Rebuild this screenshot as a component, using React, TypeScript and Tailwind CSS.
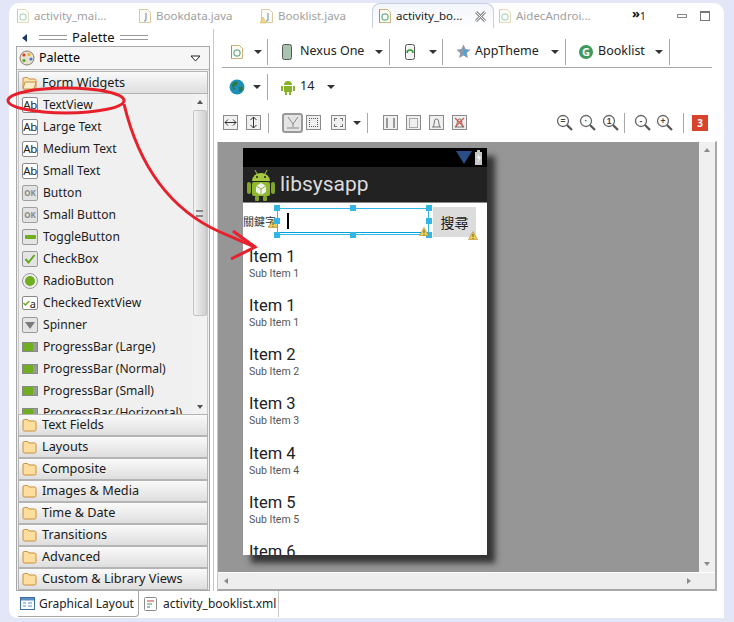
import type { ReactNode } from "react";

// small drawings used all over the Eclipse chrome
function XmlIcon({ faded = false }: { faded?: boolean }) {
  return (
    <svg width="14" height="16" viewBox="0 0 14 16" className={`shrink-0 ${faded ? "opacity-50" : ""}`}>
      <path d="M1.5 1.5h8l3 3v10h-11z" fill="#fbfbf3" stroke="#c9b37a" />
      <rect x="4" y="6" width="6" height="6" rx="2" fill="none" stroke="#3f9a7c" />
      <path d="M1.5 1.5v13" stroke="#5aa0c8" />
    </svg>
  );
}

function JavaIcon({ warn = false }: { warn?: boolean }) {
  return (
    <svg width="14" height="16" viewBox="0 0 14 16" className="shrink-0 opacity-70">
      <path d="M1.5 1.5h8l3 3v10h-11z" fill="#fbfbf5" stroke="#c9b37a" />
      <path d="M8 5v6q0 2-2 2" fill="none" stroke="#6b7fb0" strokeWidth="1.4" />
      {warn && <path d="M3 9l3 6H0z" fill="#f1c84b" stroke="#b08a20" strokeWidth=".5" />}
    </svg>
  );
}

function Caret() {
  return <span className="block w-0 h-0 border-x-[4px] border-x-transparent border-t-[4px] border-t-[#333] shrink-0" />;
}

function Sep({ h = "h-[26px]" }: { h?: string }) {
  return <span className={`block w-px bg-[#a8a8a8] shrink-0 ${h}`} />;
}

function Folder({ open = false }: { open?: boolean }) {
  return (
    <svg width="15" height="14" viewBox="0 0 15 14" className="shrink-0">
      <path d="M1 3q0-1.500 1.500-1.500h3L7 3h5.500Q14 3 14 4.500v7q0 1.500-1.500 1.500h-10Q1 13 1 11.500z" fill={open ? "#fbe3ad" : "#fdde9d"} stroke="#c98d3c" />
      {open && <path d="M3 6h11l-2 7H1z" fill="#fdeecb" stroke="#c98d3c" />}
    </svg>
  );
}

function AbIcon() {
  return (
    <span className="w-[16px] h-[16px] border border-[#8a8a8a] rounded-[2px] bg-white text-[11.500px] leading-[14px] text-[#222] text-center shrink-0 tracking-[-0.5px]">
      Ab
    </span>
  );
}

function OkIcon() {
  return (
    <span className="w-[16px] h-[16px] border border-[#a0a0a0] rounded-[2px] bg-[#e2e2e2] text-[8px] font-bold leading-[14px] text-[#8a8a8a] text-center shrink-0">
      OK
    </span>
  );
}

function BoxIcon({ children }: { children: ReactNode }) {
  return (
    <span className="w-[16px] h-[16px] border border-[#9a9a9a] rounded-[2px] bg-[#e4e4e4] flex items-center justify-center shrink-0">
      {children}
    </span>
  );
}

function ProgressIcon() {
  return (
    <span className="w-[16px] h-[10px] flex shrink-0 border border-[#888]">
      <span className="w-[10px] bg-[#6fae1e]" />
      <span className="flex-1 bg-[#9a9a9a]" />
    </span>
  );
}

const paletteItems: [string, ReactNode][] = [
  ["TextView", <AbIcon />],
  ["Large Text", <AbIcon />],
  ["Medium Text", <AbIcon />],
  ["Small Text", <AbIcon />],
  ["Button", <OkIcon />],
  ["Small Button", <OkIcon />],
  ["ToggleButton", <BoxIcon><span className="w-[11px] h-[4px] bg-[#6fae1e] rounded-[1px]" /></BoxIcon>],
  ["CheckBox", (
    <BoxIcon>
      <svg width="12" height="12" viewBox="0 0 12 12"><path d="M1.500 6l3 3.500 6-7.500" fill="none" stroke="#64a81c" strokeWidth="2" /></svg>
    </BoxIcon>
  )],
  ["RadioButton", (
    <span className="w-[16px] h-[16px] rounded-full border border-[#999] bg-[#eee] flex items-center justify-center shrink-0">
      <span className="w-[10px] h-[10px] rounded-full bg-[#6fae1e]" />
    </span>
  )],
  ["CheckedTextView", (
    <span className="w-[16px] h-[14px] border border-[#8a8a8a] rounded-[2px] bg-white flex items-center justify-end pr-[1px] text-[11px] leading-none shrink-0">
      <svg width="7" height="6" viewBox="0 0 7 6"><path d="M.5 3l2 2 4-4" fill="none" stroke="#64a81c" strokeWidth="1.400" /></svg>
      a
    </span>
  )],
  ["Spinner", <BoxIcon><span className="w-0 h-0 border-x-[5px] border-x-transparent border-t-[7px] border-t-[#7b7b7b]" /></BoxIcon>],
  ["ProgressBar (Large)", <ProgressIcon />],
  ["ProgressBar (Normal)", <ProgressIcon />],
  ["ProgressBar (Small)", <ProgressIcon />],
  ["ProgressBar (Horizontal)", <ProgressIcon />],
];

const drawers = ["Text Fields", "Layouts", "Composite", "Images & Media", "Time & Date", "Transitions", "Advanced", "Custom & Library Views"];

function Drawer({ label, open = false, h = "h-[22px]" }: { label: string; open?: boolean; h?: string }) {
  return (
    <div className={`${h} flex items-center gap-[5px] pl-[3px] border border-[#b4b4b4] bg-gradient-to-b from-[#fafafa] to-[#dedede] text-[12.700px] text-[#1a1a1a] shrink-0`}>
      <Folder open={open} />
      {label}
    </div>
  );
}

function Palette() {
  return (
    <div className="w-[194px] shrink-0 flex flex-col">
      <div className="h-[17px] flex items-center pl-[6px] text-[#111] shrink-0">
        <span className="w-0 h-0 border-y-[4px] border-y-transparent border-r-[5px] border-r-[#1b3a63]" />
        <span className="w-[28px] h-[5px] border-y border-[#999] ml-[12px]" />
        <span className="mx-[5px] leading-none">Palette</span>
        <span className="w-[28px] h-[5px] border-y border-[#999]" />
      </div>
      <div className="flex-1 min-h-0 border border-[#a8a8a8] flex flex-col">
        <div className="h-[23px] flex items-center pl-[2px] pr-[8px] border-b border-[#b4b4b4] shrink-0 bg-[#f6f6f6]">
          <svg width="16" height="16" viewBox="0 0 16 16" className="shrink-0">
            <circle cx="8" cy="8" r="7" fill="#e8e0cf" stroke="#8c7f67" />
            <circle cx="5" cy="5" r="1.600" fill="#d23a2a" />
            <circle cx="10" cy="4.500" r="1.600" fill="#e5b02b" />
            <circle cx="12" cy="9" r="1.600" fill="#3a7fd0" />
            <circle cx="5" cy="10.500" r="1.600" fill="#52a43a" />
          </svg>
          <span className="ml-[4px] flex-1 text-[12.500px]">Palette</span>
          <svg width="11" height="7" viewBox="0 0 11 7" className="shrink-0">
            <path d="M1 1h9L5.500 6z" fill="#fff" stroke="#222" />
          </svg>
        </div>
        <div className="flex-1 min-h-0 flex flex-col px-[1px] pt-[1px] bg-[#f0f0f0]">
          <Drawer label="Form Widgets" open h="h-[23px]" />
          <div className="h-[320px] flex shrink-0 overflow-hidden border-x border-[#c8c8c8]">
            <div className="flex-1 min-w-0 flex flex-col">
              {paletteItems.map(([label, icon]) => (
                <div key={label} className="h-[22px] shrink-0 flex items-center gap-[5px] pl-[3px] text-[12.100px] text-[#1c1c1c] whitespace-nowrap">
                  {icon}
                  {label}
                </div>
              ))}
            </div>
            <div className="w-[15px] shrink-0 bg-[#f2f2f2] flex flex-col items-center">
              <span className="mt-[6px] w-0 h-0 border-x-[3px] border-x-transparent border-b-[4px] border-b-[#555]" />
              <span className="mt-[6px] w-[14px] h-[206px] rounded-[2px] border border-[#c4c4c4] bg-gradient-to-r from-[#f4f4f4] to-[#cfcfcf] flex items-center justify-center">
                <span className="w-[7px] h-[7px] border-y-2 border-[#888]" />
              </span>
              <span className="mt-auto mb-[5px] w-0 h-0 border-x-[3px] border-x-transparent border-t-[4px] border-t-[#555]" />
            </div>
          </div>
          {drawers.map((d) => (
            <Drawer key={d} label={d} />
          ))}
        </div>
      </div>
    </div>
  );
}

function ToolIcon({ children, pressed = false }: { children: ReactNode; pressed?: boolean }) {
  return (
    <span className={`flex items-center justify-center shrink-0 ${pressed ? "w-[21px] h-[20px] border-2 border-[#999] rounded-[3px] bg-[#e4e4e4]" : "w-[15px] h-[15px] border border-[#8a8a8a] bg-[#f0f0f0]"}`}>
      {children}
    </span>
  );
}

function Zoom({ mark }: { mark: string }) {
  return (
    <svg width="17" height="17" viewBox="0 0 17 17" className="block shrink-0">
      <circle cx="7" cy="7" r="5.500" fill="#fff" stroke="#666" strokeWidth="1.300" />
      <path d="M11 11l5 5" stroke="#555" strokeWidth="2.200" />
      <text x="7" y="10" textAnchor="middle" fontSize="8.500" fontWeight="700" fill="#444" fontFamily="Liberation Sans, sans-serif">{mark}</text>
    </svg>
  );
}

function Toolbars() {
  return (
    <div className="shrink-0 pt-[7px]">
      <div className="h-[32px] mx-[5px] flex items-center border-b border-[#a8a8a8] text-[#222] text-[12.500px] whitespace-nowrap">
        <span className="ml-[8px]"><XmlIcon /></span>
        <span className="ml-[10px]"><Caret /></span>
        <span className="ml-[5px]"><Sep /></span>
        <svg width="10" height="16" viewBox="0 0 10 16" className="ml-[14px] shrink-0">
          <rect x=".5" y=".5" width="9" height="15" rx="2" fill="#a8c4b0" stroke="#555" />
        </svg>
        <span className="ml-[8px] w-[62px]">Nexus One</span>
        <span className="ml-[13px]"><Caret /></span>
        <span className="ml-[6px]"><Sep /></span>
        <svg width="12" height="16" viewBox="0 0 12 16" className="ml-[14px] shrink-0">
          <rect x="1.500" y=".5" width="9" height="15" rx="2" fill="#f3f3f3" stroke="#555" />
          <path d="M3 9a3 3 0 0 1 6 0" fill="none" stroke="#2f9a2f" strokeWidth="1.500" />
        </svg>
        <span className="ml-[13px]"><Caret /></span>
        <span className="ml-[5px]"><Sep /></span>
        <svg width="15" height="15" viewBox="0 0 15 15" className="ml-[13px] shrink-0">
          <path d="M7.500 .5l2.100 4.600 5 .6-3.700 3.400 1 4.900-4.400-2.500-4.400 2.500 1-4.900L.4 5.700l5-.6z" fill="#8b9bab" />
          <path d="M7.500 6l3.500 0-1.500 3 .8 4-2.800-2z" fill="#42a8d8" />
        </svg>
        <span className="ml-[4px] w-[63px]">AppTheme</span>
        <span className="ml-[13px]"><Caret /></span>
        <span className="ml-[6px]"><Sep /></span>
        <span className="ml-[13px] w-[14px] h-[14px] rounded-full bg-[#3d9a5c] text-white text-[11px] font-bold leading-[14px] text-center shrink-0">G</span>
        <span className="ml-[5px] w-[45px]">Booklist</span>
        <span className="ml-[12px]"><Caret /></span>
        <span className="ml-[6px]"><Sep /></span>
      </div>
      <div className="h-[37px] pl-[12px] flex items-center text-[#222] text-[12.500px]">
        <svg width="16" height="16" viewBox="0 0 16 16" className="shrink-0">
          <circle cx="8" cy="8" r="7.500" fill="#1f8fb8" />
          <path d="M3 5q3-3 6-2l-1 3-3 1 1 3-2 1zM10 8l4 0-1 4-3 1z" fill="#2d7a3a" />
        </svg>
        <span className="ml-[8px]"><Caret /></span>
        <span className="ml-[6px]"><Sep /></span>
        <svg width="16" height="16" viewBox="0 0 16 16" className="ml-[12px] shrink-0">
          <path d="M4 6a4 4 0 0 1 8 0zM4 7h8v6H4zM1 7h2v5H1zM13 7h2v5h-2zM5 13h2v3H5zM9 13h2v3H9z" fill="#86b32a" />
        </svg>
        <span className="ml-[4px] w-[17px]">14</span>
        <span className="ml-[10px]"><Caret /></span>
      </div>
      <div className="h-[36px] pb-[1px] pl-[6px] flex items-center">
        <ToolIcon>
          <svg width="13" height="9" viewBox="0 0 13 9"><path d="M1 4.500h11M4 1.500l-3 3 3 3M9 1.500l3 3-3 3" fill="none" stroke="#333" /></svg>
        </ToolIcon>
        <span className="ml-[8px]">
          <ToolIcon>
            <svg width="9" height="13" viewBox="0 0 9 13"><path d="M4.500 1v11M1.500 4l3-3 3 3M1.500 9l3 3 3-3" fill="none" stroke="#333" /></svg>
          </ToolIcon>
        </span>
        <span className="ml-[7px]"><Sep h="h-[20px]" /></span>
        <span className="ml-[13px]">
          <ToolIcon pressed>
            <svg width="14" height="14" viewBox="0 0 14 14"><path d="M2 1l5 7 5-7M7 8v3M1 12h12" fill="none" stroke="#888" /></svg>
          </ToolIcon>
        </span>
        <span className="ml-[3px]"><ToolIcon><span className="w-[9px] h-[9px] border border-dotted border-[#555]" /></ToolIcon></span>
        <span className="ml-[10px]"><ToolIcon><span className="w-[9px] h-[9px] border border-dashed border-[#777]" /></ToolIcon></span>
        <span className="ml-[7px]"><Caret /></span>
        <span className="ml-[6px]"><Sep h="h-[20px]" /></span>
        <span className="ml-[15px]"><ToolIcon><span className="w-[9px] h-[10px] border-x-2 border-[#999]" /></ToolIcon></span>
        <span className="ml-[8px]"><ToolIcon><span className="w-[9px] h-[10px] border border-[#aaa]" /></ToolIcon></span>
        <span className="ml-[8px]">
          <ToolIcon>
            <svg width="11" height="11" viewBox="0 0 11 11"><path d="M1 10h9M2.500 10l1-6a2 2 0 0 1 4 0l1 6" fill="none" stroke="#777" /></svg>
          </ToolIcon>
        </span>
        <span className="ml-[8px]">
          <ToolIcon>
            <svg width="11" height="11" viewBox="0 0 11 11">
              <path d="M1 10h9M2.500 10l1-6a2 2 0 0 1 4 0l1 6" fill="none" stroke="#777" />
              <path d="M1 1l9 9M10 1l-9 9" stroke="#d0584c" strokeWidth="1.300" />
            </svg>
          </ToolIcon>
        </span>
        <span className="ml-[89px]"><Zoom mark="=" /></span>
        <span className="ml-[6px]"><Zoom mark="·" /></span>
        <span className="ml-[6px]"><Zoom mark="1" /></span>
        <span className="ml-[5px]"><Sep h="h-[20px]" /></span>
        <span className="ml-[9px]"><Zoom mark="-" /></span>
        <span className="ml-[5px]"><Zoom mark="+" /></span>
        <span className="ml-[10px]"><Sep h="h-[20px]" /></span>
        <span className="block ml-[8px] w-[16px] h-[16px] bg-[#d8432c] text-white text-[10px] font-bold leading-[16px] text-center shrink-0">3</span>
      </div>
    </div>
  );
}

function Warn({ className }: { className: string }) {
  return (
    <svg width="10" height="9" viewBox="0 0 10 9" className={`absolute ${className}`}>
      <path d="M5 .5L9.500 8.500H.5z" fill="#f3cf4e" stroke="#a98a2c" strokeWidth=".6" />
      <path d="M5 3v3M5 7v1" stroke="#333" strokeWidth=".8" />
    </svg>
  );
}

function Handle({ className }: { className: string }) {
  return <span className={`absolute w-[6px] h-[6px] bg-[#33b5e5] ${className}`} />;
}

const listItems = ["Item 1", "Item 1", "Item 2", "Item 3", "Item 4", "Item 5", "Item 6"];

function Device() {
  return (
    <div className="w-[244px] h-[407px] flex flex-col bg-white shadow-[8px_8px_6px_rgba(35,35,35,0.85)] font-['Roboto',sans-serif]">
      <div className="h-[19px] bg-black flex items-center justify-end gap-[3px] pr-[5px] shrink-0">
        <span className="w-0 h-0 border-x-[8px] border-x-transparent border-t-[13px] border-t-[#2a4d86]" />
        <svg width="7" height="15" viewBox="0 0 7 15" className="shrink-0">
          <path d="M2 0h3v2h2v13H0V2h2z" fill="#c8c8c8" />
          <path d="M4 4L2 8h2l-1 4 3-5H4z" fill="#fff" />
        </svg>
      </div>
      <div className="h-[36px] bg-[#222] border-b border-[#8a8a8a] flex items-center pl-[4px] shrink-0">
        <svg width="28" height="32" viewBox="0 0 28 32" className="shrink-0">
          <path d="M8 1l2 4M20 1l-2 4" stroke="#9dc23a" />
          <path d="M5 12a9 8 0 0 1 18 0z" fill="#a5c83e" />
          <circle cx="10" cy="8" r="1" fill="#222" />
          <circle cx="18" cy="8" r="1" fill="#222" />
          <rect x="5" y="13" width="18" height="14" rx="2" fill="#8fb82e" />
          <rect x="0" y="13" width="4" height="12" rx="2" fill="#80a528" />
          <rect x="24" y="13" width="4" height="12" rx="2" fill="#80a528" />
          <rect x="8" y="27" width="4" height="5" rx="1" fill="#80a528" />
          <rect x="16" y="27" width="4" height="5" rx="1" fill="#80a528" />
          <path d="M14 14l5 3v6l-5 3-5-3v-6z" fill="#f2f2f2" />
          <path d="M9 17l5 3 5-3M14 20v6" fill="none" stroke="#8fb82e" />
        </svg>
        <span className="ml-[5px] text-[#dcdcdc] text-[21px] leading-none">libsysapp</span>
      </div>
      <div className="h-[29px] relative shrink-0 font-['Noto_Sans_CJK_TC',sans-serif]">
        <span className="absolute left-0 top-[13px] text-[11px] leading-none text-[#333] whitespace-nowrap">關鍵字</span>
        <Warn className="left-[25px] top-[16px]" />
        <span className="absolute left-[37px] top-[29px] w-[149px] h-[1px] bg-[#00a0d8]" />
        <span className="absolute left-[44px] top-[10px] w-[2px] h-[16px] bg-black" />
        <span className="absolute left-[190px] top-[4px] w-[43px] h-[30px] bg-[#dcdcdc] text-[14px] leading-[30px] text-center text-[#222]">搜尋</span>
        <span className="absolute left-[34px] top-[5px] w-[152px] h-[27px] border border-[#33b5e5]" />
        <Handle className="left-[31px] top-[2px]" />
        <Handle className="left-[107px] top-[2px]" />
        <Handle className="left-[183px] top-[2px]" />
        <Handle className="left-[31px] top-[15px]" />
        <Handle className="left-[183px] top-[15px]" />
        <Handle className="left-[31px] top-[29px]" />
        <Handle className="left-[107px] top-[29px]" />
        <Handle className="left-[183px] top-[29px]" />
        <Warn className="left-[176px] top-[24px]" />
        <Warn className="left-[225px] top-[28px]" />
      </div>
      <div className="flex-1 min-h-0 overflow-hidden pl-[6px] pt-[15.500px]">
        {listItems.map((t, i) => (
          <div key={i} className="h-[49.300px]">
            <div className="text-[16.500px] leading-[18px] text-[#222]">{t}</div>
            <div className="mt-[1px] text-[10.500px] leading-[13px] text-[#555]">Sub Item {t.slice(5)}</div>
          </div>
        ))}
      </div>
    </div>
  );
}

function Editor() {
  return (
    <div className="flex-1 min-w-0 flex flex-col">
      <Toolbars />
      <div className="flex-1 min-h-0 border-t border-[#fff] border-r-2 border-b-2 border-r-[#a8a8a8] border-b-[#a8a8a8] border-l border-l-[#c8c8c8] flex flex-col">
        <div className="flex-1 min-h-0 flex">
          <div className="flex-1 min-w-0 bg-[#969696] pl-[25px] pt-[6px]">
            <Device />
          </div>
          <div className="w-[16px] shrink-0 bg-[#f0f0f0] flex flex-col items-center justify-between py-[6px]">
            <span className="w-0 h-0 border-x-[3px] border-x-transparent border-b-[4px] border-b-[#8a8a8a]" />
            <span className="w-0 h-0 border-x-[3px] border-x-transparent border-t-[4px] border-t-[#8a8a8a]" />
          </div>
        </div>
        <div className="h-[17px] shrink-0 flex items-center border-t border-white bg-[#eeeeee]">
          <span className="ml-[6px] w-0 h-0 border-y-[3px] border-y-transparent border-r-[4px] border-r-[#8a8a8a]" />
          <span className="ml-auto mr-[24px] w-0 h-0 border-y-[3px] border-y-transparent border-l-[4px] border-l-[#8a8a8a]" />
        </div>
      </div>
    </div>
  );
}

function TopTab({ icon, label, className }: { icon: ReactNode; label: string; className: string }) {
  return (
    <div className={`flex items-center gap-[4px] text-[#a0a0a0] whitespace-nowrap shrink-0 ${className}`}>
      {icon}
      {label}
    </div>
  );
}

export default function App() {
  return (
    <div className="relative w-[734px] h-[622px] overflow-hidden bg-[#e2e6f6] pl-[9px] pr-[10px] pt-[3px] pb-[4px] font-['Noto_Sans',sans-serif] text-[13px]">
      <div className="h-full bg-white rounded-t-[10px] rounded-bl-[8px] flex flex-col">
        <div className="h-[25px] shrink-0 flex items-center pl-[7px] text-[11.500px]">
          <TopTab icon={<XmlIcon faded />} label="activity_mai..." className="w-[122px]" />
          <TopTab icon={<JavaIcon />} label="Bookdata.java" className="w-[122px]" />
          <TopTab icon={<JavaIcon warn />} label="Booklist.java" className="w-[112px]" />
          <div className="w-[122px] h-[25px] shrink-0 rounded-t-[8px] border border-b-0 border-[#c8cfe2] bg-gradient-to-b from-[#f2f5fb] to-white flex items-center pl-[5px] gap-[4px] text-[#1a1a1a] whitespace-nowrap">
            <XmlIcon />
            activity_bo...
            <svg width="11" height="11" viewBox="0 0 11 11" className="ml-[9px] shrink-0">
              <path d="M1 1l9 9M10 1l-9 9" stroke="#888" strokeWidth="3" />
              <path d="M1 1l9 9M10 1l-9 9" stroke="#fff" strokeWidth="1" />
            </svg>
          </div>
          <TopTab icon={<XmlIcon faded />} label="AidecAndroi..." className="ml-[4px] w-[134px]" />
          <span className="text-[13px] leading-none text-[#111] w-[45px] font-bold -mt-[5px]">»<sub className="font-normal text-[10px]">1</sub></span>
          <span className="w-[10px] h-[4px] border border-[#888] shrink-0" />
          <span className="ml-[13px] w-[10px] h-[10px] border border-[#777] border-t-2 shrink-0" />
        </div>
        <div className="flex-1 min-h-0 flex px-[7px] pt-[1px]">
          <Palette />
          <div className="w-[7px] shrink-0 flex justify-center">
            <span className="w-px bg-[#c8c8c8]" />
          </div>
          <Editor />
        </div>
        <div className="h-[27px] shrink-0 flex pl-[9px] text-[#222] text-[12px]">
          <div className="w-[121px] h-[26px] flex items-center gap-[4px] pl-[2px] border-r border-b border-[#a8a8a8] rounded-br-[4px] whitespace-nowrap">
            <svg width="15" height="13" viewBox="0 0 15 13" className="shrink-0">
              <rect x=".5" y=".5" width="14" height="12" fill="#fff" stroke="#3a6ea5" />
              <rect x="1" y="1" width="13" height="2.500" fill="#5a8ec5" />
              <path d="M3 6h3M3 9h3M8 6h4M8 9h4" stroke="#5a8ec5" />
            </svg>
            Graphical Layout
          </div>
          <div className="w-[140px] h-[26px] flex items-center gap-[6px] pl-[5px] border-r border-[#c8c8c8] whitespace-nowrap">
            <svg width="13" height="14" viewBox="0 0 13 14" className="shrink-0">
              <rect x=".5" y=".5" width="12" height="13" rx="1" fill="#fff" stroke="#8a8a8a" />
              <path d="M3 4h7" stroke="#c23a30" />
              <path d="M3 7h5" stroke="#3a9a4a" />
              <path d="M3 10h3" stroke="#3a6ea5" />
            </svg>
            activity_booklist.xml
          </div>
        </div>
      </div>
      <svg width="734" height="622" viewBox="0 0 734 622" className="absolute left-0 top-0 pointer-events-none">
        <g fill="none" stroke="#e8202c" strokeWidth="3">
          <ellipse cx="66" cy="100.500" rx="58" ry="12.500" />
          <path d="M124 104C135 150 160 205 220 232L255 247" />
          <path d="M233 231L255 247L231 259" />
        </g>
      </svg>
    </div>
  );
}
